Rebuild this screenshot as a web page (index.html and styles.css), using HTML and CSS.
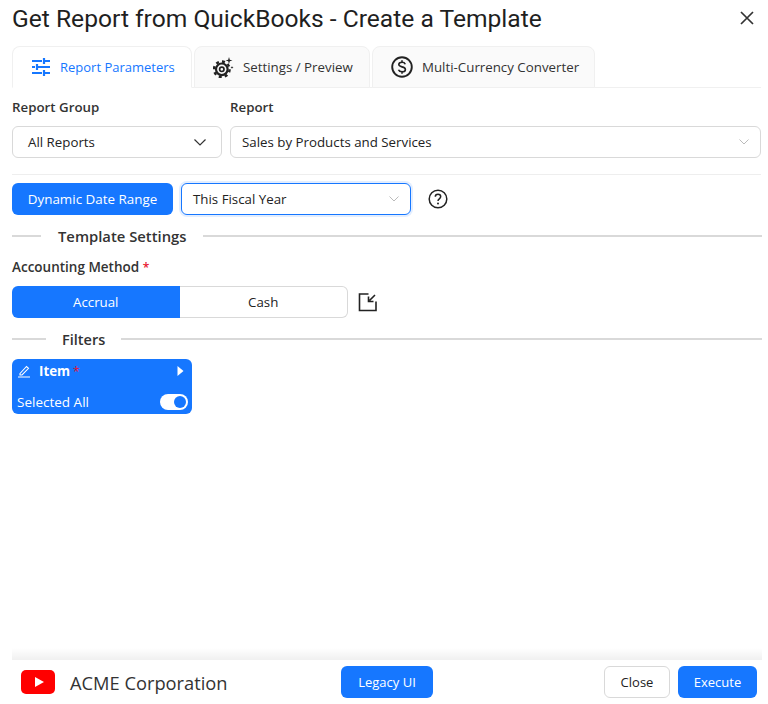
FILE: index.html
```html
<!DOCTYPE html>
<html lang="en">
  <head>
    <meta charset="UTF-8" />
    <meta name="viewport" content="width=device-width, initial-scale=1.0" />
    <title>Get Report from QuickBooks - Create a Template</title>
    <link rel="stylesheet" href="styles.css">
  </head>
  <body>
    <div class="dialog">
      <div class="head">
        <h1>Get Report from QuickBooks - Create a Template</h1>
        <svg class="close-x" width="14" height="14" viewBox="0 0 14 14"><path d="M1 1l12 12M13 1L1 13" fill="none" stroke="#333" stroke-width="1.7"/></svg>
      </div>

      <div class="tabs">
        <div class="tab tab-active">
          <svg width="20" height="20" viewBox="0 0 20 20" fill="none" stroke="#1677ff" stroke-width="2.200"><path d="M1 4h10M13 1v6M13 4h6M1 10h3M6 7v6M6 10h13M1 16h10M13 13v6M13 16h6"/></svg>
          <span>Report Parameters</span>
        </div>
        <div class="tab tab-2">
          <svg width="21" height="21" viewBox="0 0 21 21" fill="none" stroke="#222"><circle cx="8.800" cy="12.300" r="5.800" stroke-width="2.200"/><circle cx="8.800" cy="12.300" r="7.800" stroke-width="2.400" stroke-dasharray="3 3.120"/><circle cx="8.800" cy="12.300" r="2.200" stroke-width="1.700"/><path d="M16 0l.8 2.700 2.700.8-2.700.8-.8 2.700-.8-2.700-2.700-.8 2.700-.8zM19 9l.4 1.100 1.100.4-1.100.4-.4 1.100-.4-1.100-1.100-.4 1.100-.4z" fill="#222" stroke="none"/></svg>
          <span>Settings / Preview</span>
        </div>
        <div class="tab tab-3">
          <svg width="22" height="22" viewBox="0 0 22 22" fill="none" stroke="#222"><circle cx="11" cy="11" r="9.800" stroke-width="1.900"/><path d="M14.300 8.200c-.5-1.200-1.700-1.900-3.300-1.900-1.800 0-3.200.9-3.200 2.300 0 3 6.600 1.500 6.600 4.800 0 1.500-1.500 2.400-3.400 2.400-1.600 0-3-.7-3.500-2M11 4.200v2M11 15.800v2" stroke-width="1.600"/></svg>
          <span>Multi-Currency Converter</span>
        </div>
      </div>

      <div class="report-row">
        <div class="field field-group">
          <label class="label">Report Group</label>
          <div class="select">
            <span>All Reports</span>
            <svg width="12" height="7" viewBox="0 0 12 7"><path d="M.5.500L6 6 11.500.500" fill="none" stroke="#333" stroke-width="1.200"/></svg>
          </div>
        </div>
        <div class="field field-report">
          <label class="label">Report</label>
          <div class="select select-wide">
            <span>Sales by Products and Services</span>
            <svg width="10" height="6" viewBox="0 0 10 6"><path d="M.500.500L5 5 9.500.500" fill="none" stroke="#bbb" stroke-width="1"/></svg>
          </div>
        </div>
      </div>

      <hr class="rule">

      <div class="date-row">
        <button class="btn btn-primary btn-date">Dynamic Date Range</button>
        <div class="select select-focus">
          <span>This Fiscal Year</span>
          <svg width="10" height="6" viewBox="0 0 10 6"><path d="M.500.500L5 5 9.500.500" fill="none" stroke="#bbb" stroke-width="1"/></svg>
        </div>
        <svg class="help" width="20" height="20" viewBox="0 0 20 20"><circle cx="10" cy="10" r="8.800" fill="none" stroke="#222" stroke-width="1.500"/><path d="M7.300 7.700c0-1.500 1.200-2.500 2.700-2.500s2.700 1 2.700 2.400c0 2.200-2.700 2.200-2.700 4.300" fill="none" stroke="#222" stroke-width="1.500"/><circle cx="10" cy="14.600" r="1" fill="#222"/></svg>
      </div>

      <div class="section section-template">
        <span>Template Settings</span>
      </div>

      <label class="label label-method">Accounting Method <em>*</em></label>
      <div class="method-row">
        <div class="segment">
          <div class="seg seg-on">Accrual</div>
          <div class="seg">Cash</div>
        </div>
        <svg width="20" height="20" viewBox="0 0 20 20" fill="none" stroke="#222" stroke-width="1.600"><path d="M10.500 2H1.500v16.500H18V9.500"/><path d="M17 3l-5.500 5.500M10.500 4.500V9.500H15.500"/></svg>
      </div>

      <div class="section section-filters">
        <span>Filters</span>
      </div>

      <div class="filter-card">
        <div class="filter-top">
          <svg width="14" height="14" viewBox="0 0 14 14" fill="none" stroke="#fff" stroke-width="1.100"><path d="M3 9.500L9.500 2.500l2 1.800L5 11H3zM1 13h12"/></svg>
          <strong>Item</strong><em>*</em>
          <svg class="caret" width="7" height="10" viewBox="0 0 7 10"><path d="M0.500 0l6 5-6 5z" fill="#fff"/></svg>
        </div>
        <div class="filter-bottom">
          <span>Selected All</span>
          <div class="toggle"><div class="knob"></div></div>
        </div>
      </div>

      <div class="foot">
        <svg class="logo" width="34" height="24" viewBox="0 0 34 24"><rect width="34" height="24" rx="5" fill="#f00"/><path d="M14 7l9 5-9 5z" fill="#fff"/></svg>
        <span class="company">ACME Corporation</span>
        <button class="btn btn-primary btn-legacy">Legacy UI</button>
        <button class="btn btn-plain">Close</button>
        <button class="btn btn-primary btn-exec">Execute</button>
      </div>
    </div>
  </body>
</html>
```

FILE: styles.css
```css
* {
  box-sizing: border-box;
}
html,
body {
  margin: 0;
  height: 100%;
}
body {
  background: #fff;
  color: #222;
  font-family: "Open Sans", "Noto Sans", sans-serif;
  font-size: 13.300px;
  overflow: hidden;
}
.dialog {
  height: 704px;
  padding: 0 6px 0 12px;
  display: flex;
  flex-direction: column;
}
.head {
  height: 46px;
  padding-bottom: 10px;
  display: flex;
  align-items: center;
  justify-content: space-between;
}
h1 {
  margin: 0;
  font-family: "Roboto", sans-serif;
  font-size: 24.600px;
  font-weight: 400;
  color: #1f1f1f;
}
.close-x {
  margin-right: 8px;
}
.tabs {
  display: flex;
  gap: 2px;
  height: 42px;
  width: 749px;
  border-bottom: 1px solid #f0f0f0;
}
.tab {
  height: 42px;
  display: flex;
  align-items: center;
  gap: 9px;
  background: #fafafa;
  border: 1px solid #f0f0f0;
  border-radius: 8px 8px 0 0;
  color: #333;
}
.tab-active {
  width: 180px;
  padding-left: 18px;
  background: #fff;
  border-bottom-color: #fff;
  color: #1677ff;
  font-size: 13px;
}
.tab-2 {
  width: 176px;
  padding-left: 18px;
}
.tab-3 {
  width: 223px;
  padding-left: 18px;
}
.report-row {
  display: flex;
  gap: 8px;
  margin-top: 10px;
  width: 749px;
}
.field-group {
  width: 210px;
}
.field-report {
  flex: 1;
}
.label {
  display: block;
  height: 19px;
  line-height: 19px;
  font-weight: 600;
  color: #333;
}
.label em,
.filter-top em {
  color: #e8112d;
  font-style: normal;
  font-size: 12px;
}
.select {
  height: 32px;
  margin-top: 9px;
  display: flex;
  align-items: center;
  justify-content: space-between;
  padding: 0 15px;
  border: 1px solid #d9d9d9;
  border-radius: 6px;
  background: #fff;
}
.select-wide {
  padding: 0 11px;
}
hr.rule {
  width: 749px;
  margin: 16px 0 0;
  border: 0;
  border-top: 1px solid #eee;
}
.date-row {
  display: flex;
  align-items: center;
  margin-top: 8px;
}
.btn {
  height: 32px;
  border-radius: 6px;
  border: 1px solid transparent;
  font-family: inherit;
  font-size: 13px;
  padding: 0;
}
.btn-primary {
  background: #1677ff;
  color: #fff;
}
.btn-plain {
  background: #fff;
  border-color: #d9d9d9;
  color: #222;
}
.btn-date {
  width: 161px;
  font-size: 13.400px;
}
.select-focus {
  width: 230px;
  margin: 0 0 0 8px;
  padding: 0 11px;
  border-color: #1677ff;
  box-shadow: 0 0 0 2px rgba(22, 119, 255, 0.12);
}
.help {
  margin-left: 17px;
}
.section {
  display: flex;
  align-items: center;
  font-size: 14.800px;
  font-weight: 600;
  color: #333;
  height: 22px;
}
.section::before,
.section::after {
  content: "";
  height: 2px;
  background: #d9d9d9;
}
.section::after {
  flex: 1;
}
.section-template {
  margin-top: 10px;
  gap: 17px;
}
.section-template::before {
  width: 29px;
}
.section-filters {
  margin-top: 10px;
  gap: 16px;
  font-size: 14.500px;
}
.section-filters::before {
  width: 34px;
}
.label-method {
  margin-top: 11px;
  font-size: 13.500px;
}
.method-row {
  display: flex;
  align-items: center;
  gap: 10px;
  margin-top: 9px;
}
.segment {
  display: flex;
  width: 336px;
  height: 32px;
}
.seg {
  flex: 1;
  display: flex;
  align-items: center;
  justify-content: center;
  border: 1px solid #d9d9d9;
  border-left: 0;
  border-radius: 0 6px 6px 0;
}
.seg-on {
  background: #1677ff;
  border: 0;
  border-radius: 6px 0 0 6px;
  color: #fff;
}
.filter-card {
  width: 180px;
  height: 55px;
  margin-top: 9px;
  padding: 0 4px 0 5px;
  display: flex;
  flex-direction: column;
  background: #1677ff;
  border-radius: 6px;
  color: #fff;
}
.filter-top {
  height: 24px;
  display: flex;
  align-items: center;
  gap: 3px;
}
.filter-top strong {
  margin-left: 5px;
  font-weight: 700;
}
.caret {
  margin-left: auto;
  margin-right: 4px;
}
.filter-bottom {
  height: 22px;
  margin-top: 8px;
  display: flex;
  align-items: center;
  justify-content: space-between;
  font-size: 13.500px;
}
.toggle {
  width: 28px;
  height: 16px;
  padding: 2px;
  background: #fff;
  border-radius: 8px;
  display: flex;
  justify-content: flex-end;
}
.knob {
  width: 12px;
  height: 12px;
  background: #1677ff;
  border-radius: 50%;
}
.foot {
  margin-top: auto;
  margin-bottom: 6px;
  height: 32px;
  display: flex;
  align-items: center;
  position: relative;
}
/* soft band above the footer */
.foot::before {
  content: "";
  position: absolute;
  left: 0;
  right: 0;
  top: -18px;
  height: 12px;
  background: linear-gradient(rgba(0, 0, 0, 0), rgba(0, 0, 0, 0.06));
}
.logo {
  margin-left: 9px;
}
.company {
  margin-left: 15px;
  width: 271px;
  font-size: 18.300px;
  color: #333;
}
.btn-legacy {
  width: 92px;
}
.btn-plain {
  width: 66px;
  margin-left: 171px;
}
.btn-exec {
  width: 79px;
  margin-left: 8px;
}
```
